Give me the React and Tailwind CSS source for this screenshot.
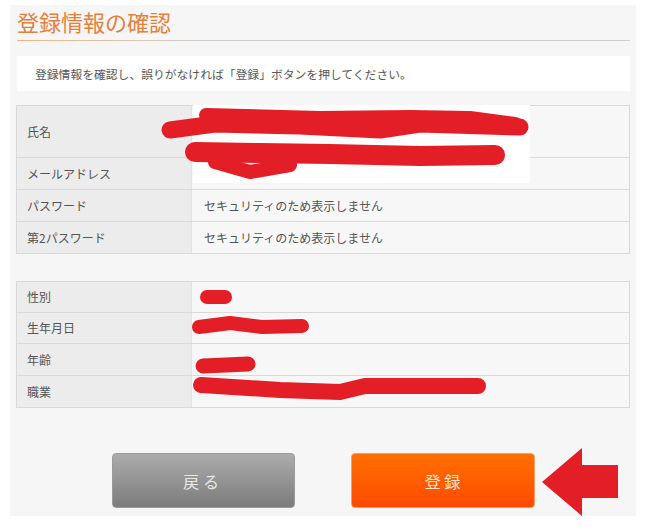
const font = { fontFamily: '"Noto Sans CJK JP", "Noto Sans", sans-serif' };

const account = [
  { label: '氏名', value: '', h: 'h-[51px]' },
  { label: 'メールアドレス', value: '', h: 'h-[32px]' },
  { label: 'パスワード', value: 'セキュリティのため表示しません', h: 'h-[32px]' },
  { label: '第2パスワード', value: 'セキュリティのため表示しません', h: 'h-[32px]' },
];

const profile = [
  { label: '性別', h: 'h-[30px]' },
  { label: '生年月日', h: 'h-[31px]' },
  { label: '年齢', h: 'h-[32px]' },
  { label: '職業', h: 'h-[32px]' },
];

function InfoTable({ rows }) {
  return (
    <div className="border border-[#d9d9d9] bg-[#f7f7f7]">
      {rows.map((r, i) => (
        <div key={r.label} className={`flex ${r.h} ${i > 0 ? 'border-t border-[#d9d9d9]' : ''}`}>
          <div className="w-[175px] shrink-0 flex items-center pl-[10px] bg-[#ececec] border-r border-[#e2e2e2] text-[12px] text-[#555]">
            {r.label}
          </div>
          <div className="flex items-center pl-[12px] text-[12px] text-[#555]">{r.value}</div>
        </div>
      ))}
    </div>
  );
}

// redaction scribbles + arrow drawn over the page
function Marks() {
  const red = '#e41e26';
  return (
    <svg className="absolute inset-0 pointer-events-none" width="656" height="527" viewBox="0 0 656 527">
      <rect x="193" y="105" width="337" height="78" fill="#ffffff" />
      <g fill="none" stroke={red} strokeLinecap="round" strokeLinejoin="round">
        <path d="M170 130 L215 124 L300 126 L380 130 L420 124 L520 127" strokeWidth="17" />
        <path d="M206 115 L320 118 L410 117 L470 118 L515 124" strokeWidth="14" />
        <path d="M195 152 L260 153 L330 154 L420 156 L495 155" strokeWidth="20" />
        <path d="M215 162 L250 172 L290 165" strokeWidth="14" />
        <path d="M207 297 L225 297" strokeWidth="14" />
        <path d="M199 327 L230 323 L262 327 L302 326" strokeWidth="14" />
        <path d="M203 366 L248 364" strokeWidth="15" />
        <path d="M201 385 L280 390 L340 392 L365 386 L478 386" strokeWidth="16" />
      </g>
      <polygon points="542,482 582,448 582,465 618,465 618,498 582,498 582,516" fill={red} />
    </svg>
  );
}

export default function App() {
  return (
    <div className="relative w-[656px] h-[527px] bg-white overflow-hidden" style={font}>
      <div className="ml-[10px] mt-[5px] w-[626px] h-[511px] bg-[#f6f6f6] px-[6px]">
        <div className="pt-[2px] pl-[1px]">
          <h1 className="text-[22px] leading-[28px] text-[#e5803a] font-normal">登録情報の確認</h1>
          <div className="mt-[5px] h-[1px] bg-linear-to-r from-[#f3b27c] from-0% to-[#cfcfcf] to-30%" />
        </div>
        <div className="mt-[15px] ml-[1px] h-[35px] bg-white flex items-center pl-[18px] text-[11.8px] text-[#555]">
          登録情報を確認し、誤りがなければ「登録」ボタンを押してください。
        </div>
        <div className="mt-[14px]">
          <InfoTable rows={account} />
        </div>
        <div className="mt-[27px]">
          <InfoTable rows={profile} />
        </div>
        <div className="mt-[45px] flex justify-center gap-[56px]">
          <button className="w-[183px] h-[55px] rounded-[4px] bg-linear-to-b from-[#acacac] to-[#7c7c7c] border border-[#9a9a9a] text-[16px] tracking-[0.25em] text-[#e8e8e8]">
            戻る
          </button>
          <button className="w-[184px] h-[55px] rounded-[4px] bg-linear-to-b from-[#ff6f00] to-[#ff4a00] border border-[#f3a060] text-[16px] text-[#ffe6d2]">
            登 録
          </button>
        </div>
      </div>
      <Marks />
    </div>
  );
}
